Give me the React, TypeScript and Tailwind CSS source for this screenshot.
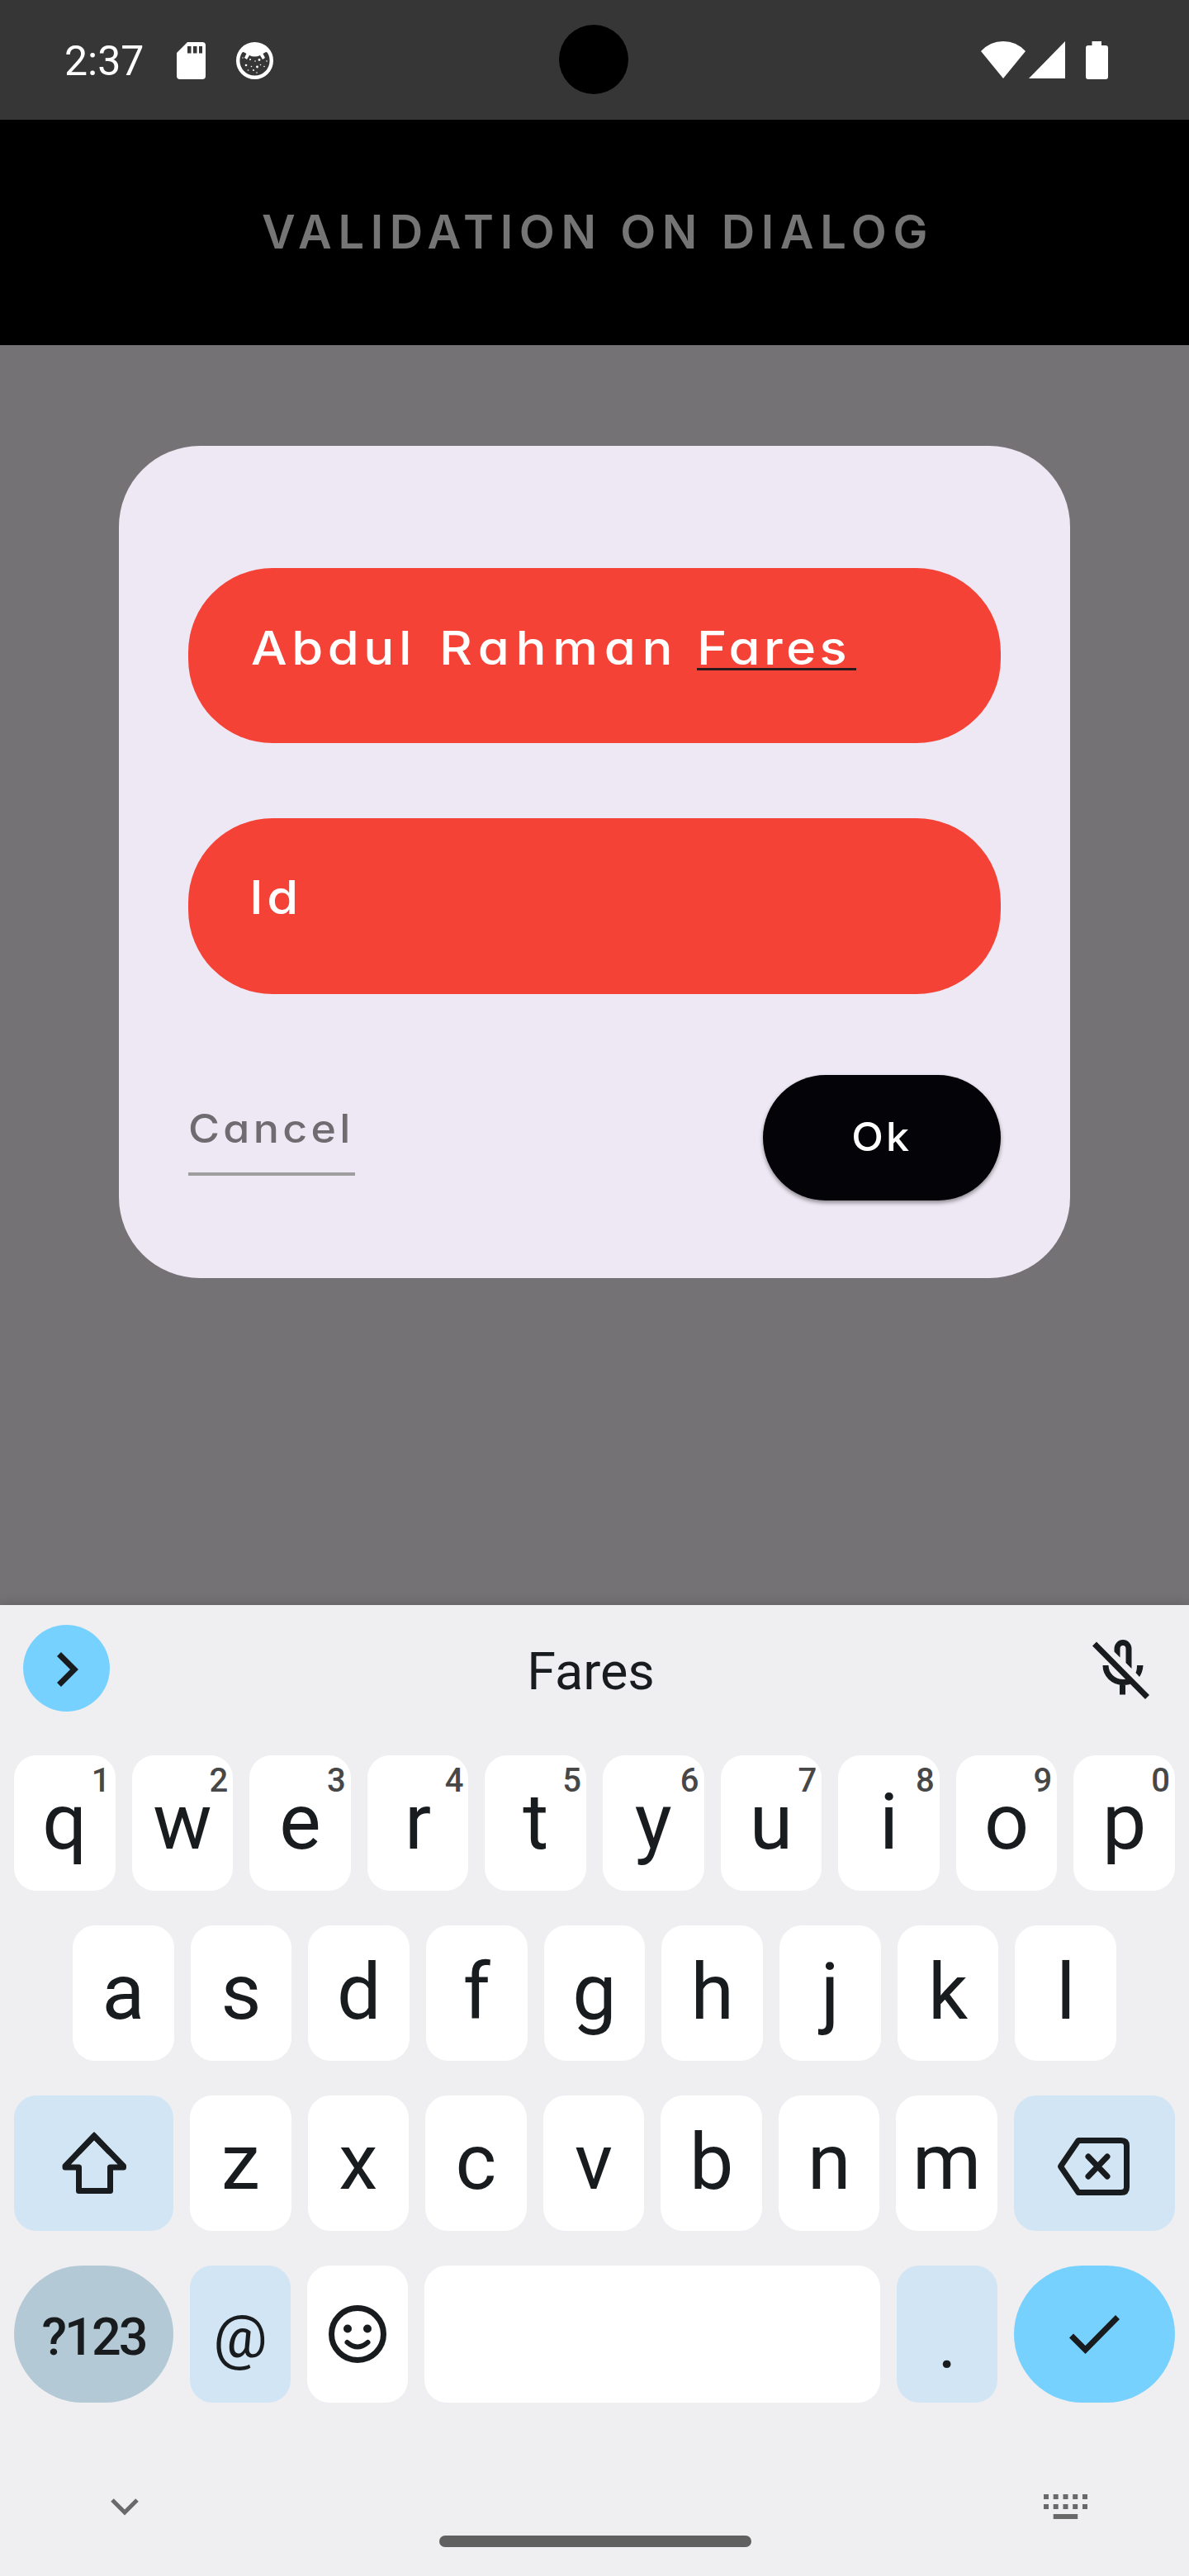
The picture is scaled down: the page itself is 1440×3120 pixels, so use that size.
import React from "react";

type KeyDef = { label: string; hint?: string };

const row1: KeyDef[] = "qwertyuiop".split("").map((c, i) => ({ label: c, hint: String((i + 1) % 10) }));
const row2: KeyDef[] = "asdfghjkl".split("").map((c) => ({ label: c }));
const row3: KeyDef[] = "zxcvbnm".split("").map((c) => ({ label: c }));

function Key({ label, hint }: KeyDef) {
  return (
    <div className="relative flex h-[164px] min-w-0 flex-1 justify-center rounded-[27px] bg-white">
      <span className="mt-[25px] text-[95px] leading-[112px] text-[#191c1e]">{label}</span>
      {hint && (
        <span className="absolute top-[7px] right-[6px] text-[40px] leading-[48px] font-medium text-[#474747]">{hint}</span>
      )}
    </div>
  );
}

function StatusBar() {
  return (
    <div className="relative flex h-[145px] items-start justify-between bg-[#363636] text-white">
      <div className="flex items-start pl-[78px]">
        <span className="mt-[45px] w-[136px] text-[50px] leading-[59px]">2:37</span>
        <svg className="mt-[51px] h-[45px] w-[35px]" viewBox="0 0 35 45" fill="currentColor">
          <path
            fillRule="evenodd"
            d="M13 0H31Q35 0 35 4V41Q35 45 31 45H4Q0 45 0 41V13ZM13 5V13.500H17.500V5ZM20 5V13.500H24.500V5ZM27 5V13.500H31V5Z"
          />
        </svg>
        <svg className="mt-[51px] ml-[37px] h-[45px] w-[45px]" viewBox="0 0 45 45" fill="currentColor">
          <circle cx="22.500" cy="22.500" r="20.300" fill="none" stroke="currentColor" strokeWidth="4.400" />
          <path d="M5 13Q12 1 22.500 1T40 13L36 12L32.500 14L35 19L32 21L29 16Q26 17.500 22.500 17.500T16 16L13 21L10 19L12.500 14L9 12Z" />
          <g>
            <circle cx="8" cy="19" r="0.700" />
            <circle cx="12" cy="28" r="1.300" />
            <circle cx="17" cy="21" r="1" />
            <circle cx="23" cy="23" r="0.800" />
            <circle cx="28" cy="21.500" r="1.400" />
            <circle cx="37" cy="23" r="0.800" />
            <circle cx="25.500" cy="30" r="1.400" />
            <circle cx="18.500" cy="29.500" r="0.800" />
            <circle cx="34" cy="29.500" r="0.800" />
            <circle cx="21" cy="34" r="1" />
            <circle cx="14.500" cy="34" r="0.800" />
            <circle cx="29.500" cy="27.500" r="0.800" />
            <circle cx="25" cy="37" r="0.800" />
          </g>
        </svg>
      </div>
      <div className="absolute top-[30px] left-[677px] size-[84px] rounded-full bg-black" />
      <div className="flex items-start pr-[98px]">
        <svg className="mt-[50px] h-[45px] w-[54px]" viewBox="0 0 54 45" fill="currentColor">
          <path d="M0 12Q11 0 27 0T54 12L27 45Z" />
        </svg>
        <svg className="mt-[50px] ml-[4px] h-[45px] w-[44px]" viewBox="0 0 44 45" fill="currentColor">
          <path d="M44 0V45H0Z" />
        </svg>
        <svg className="mt-[50px] ml-[25px] h-[46px] w-[27px]" viewBox="0 0 27 46" fill="currentColor">
          <path d="M7.500 0H19V5H24Q27 5 27 8V43Q27 46 24 46H3Q0 46 0 43V8Q0 5 3 5H7.500Z" />
        </svg>
      </div>
    </div>
  );
}

function Dialog() {
  return (
    <div className="mx-[144px] mt-[121px] flex h-[1008px] flex-col rounded-[98px] bg-[#eee8f4] px-[84px] pt-[148px] font-['Inter'] font-medium [font-feature-settings:'cv11'_1]">
      <div className="flex h-[212px] items-start rounded-[102px] bg-[#f44336] pt-[64px] pl-[76px] text-[56px] leading-[67px] whitespace-nowrap text-white">
        <span className="w-[228px]">
          <span className="inline-block origin-left scale-x-110 tracking-[5px]">Abdul</span>
        </span>
        <span className="w-[312px]">
          <span className="inline-block origin-left scale-x-110 tracking-[7px]">Rahman</span>
        </span>
        <span className="relative w-[193px]">
          <span className="inline-block origin-left scale-x-110 tracking-[4px]">Fares</span>
          <span className="absolute top-[57px] left-0 h-[3px] w-[193px] bg-[#2b1a1d]" />
        </span>
      </div>
      <div className="mt-[91px] flex h-[213px] items-start rounded-[102px] bg-[#f44336] pt-[63px] pl-[74px] text-[56px] leading-[67px] text-white">
        <span className="inline-block origin-left scale-x-110 tracking-[4px]">Id</span>
      </div>
      <div className="mt-[98px] flex items-start justify-between">
        <div className="mt-[36px] h-[86px] w-[202px] border-b-4 border-[#9e9e9e] text-[48px] leading-[58px] whitespace-nowrap text-[#6f6c71]">
          <span className="inline-block origin-left scale-x-108 tracking-[4px]">Cancel</span>
        </div>
        <div className="flex h-[152px] w-[288px] justify-center rounded-full bg-[#040308] pt-[46px] text-[48px] leading-[58px] text-white shadow-[0_3px_5px_rgba(0,0,0,0.4)]">
          <span className="inline-block scale-x-105 tracking-[3px]">Ok</span>
        </div>
      </div>
    </div>
  );
}

function Keyboard() {
  return (
    <div className="flex h-[1176px] flex-col bg-[#efeff2] shadow-[0_0_14px_rgba(0,0,0,0.2)]">
      <div className="flex h-[182px] items-start justify-between pt-[24px] pr-[48px] pl-[28px]">
        <div className="flex size-[105px] items-center justify-center rounded-full bg-[#77d1ff]">
          <svg className="mt-[2px] ml-[2px] h-[42px] w-[26px]" viewBox="0 0 26 42" fill="none" stroke="#191c1e" strokeWidth="7">
            <path d="M2.500 2.500L21 21L2.500 39.500" />
          </svg>
        </div>
        <span className="mt-[19px] mr-[24px] text-[63px] leading-[76px] text-[#191c1e]">Fares</span>
        <svg className="mt-[17px] h-[74px] w-[70px]" viewBox="0 0 70 74" fill="none" stroke="#191c1e" strokeWidth="7">
          <path d="M3.500 6L67.500 70.500" />
          <path
            d="M27.500 15.500V12A10.500 11 0 0 1 48.500 12V36L41.500 29V12A3.500 4 0 0 0 34.500 12V22.500ZM55 32H62.500Q62 40 58 46L53.500 41Q55 38 55 32Z"
            fill="#191c1e"
            stroke="none"
          />
          <path d="M17 32A21 20.500 0 0 0 38 52.500Q42 52.500 46 51.500M37.500 52V67.500" />
        </svg>
      </div>
      <div className="flex gap-[20px] px-[17px]">
        {row1.map((k) => (
          <Key key={k.label} {...k} />
        ))}
      </div>
      <div className="mt-[42px] flex gap-[20px] px-[88px]">
        {row2.map((k) => (
          <Key key={k.label} {...k} />
        ))}
      </div>
      <div className="mt-[42px] flex gap-[20px] px-[17px]">
        <div className="flex h-[164px] w-[193px] justify-center rounded-[27px] bg-[#d2e5f4]">
          <svg className="mt-[44px] h-[76px] w-[78px]" viewBox="0 0 78 76" fill="none" stroke="#191c1e" strokeWidth="7" strokeLinejoin="round">
            <path d="M39 5L4 41.500V43H20.500V71.500H58.500V43H74.500V41.500Z" />
            <path d="M20 24.800L39 5L58 24.800" strokeLinejoin="miter" />
          </svg>
        </div>
        {row3.map((k) => (
          <Key key={k.label} {...k} />
        ))}
        <div className="flex h-[164px] w-[195px] justify-center rounded-[27px] bg-[#d2e5f4]">
          <svg className="mt-[51px] mr-[3px] h-[70px] w-[88px]" viewBox="0 0 88 70" fill="none" stroke="#191c1e" strokeWidth="7" strokeLinejoin="round">
            <path d="M26 3.500H78Q84.500 3.500 84.500 10V60Q84.500 66.500 78 66.500H26L4.500 35Z" />
            <path d="M38 23L61 47M61 23L38 47" strokeLinecap="round" />
          </svg>
        </div>
      </div>
      <div className="mt-[42px] flex gap-[20px] px-[17px] text-[#191c1e]">
        <div className="flex h-[166px] w-[193px] justify-center rounded-full bg-[#b4c9d6] pt-[49px] text-[63px] leading-[76px] font-medium tracking-[-3px]">
          ?123
        </div>
        <div className="flex h-[166px] w-[122px] justify-center rounded-[27px] bg-[#d2e5f4] pt-[43px] text-[73px] leading-[86px]">@</div>
        <div className="flex h-[166px] w-[122px] items-center justify-center rounded-[27px] bg-white">
          <svg className="size-[70px]" viewBox="0 0 70 70" fill="none" stroke="#191c1e" strokeWidth="7">
            <circle cx="35" cy="35" r="31.500" />
            <circle cx="23" cy="28.500" r="5" fill="#191c1e" stroke="none" />
            <circle cx="47" cy="28.500" r="5" fill="#191c1e" stroke="none" />
            <path d="M22.500 45Q35 56 47.500 45" strokeLinecap="round" strokeWidth="6" />
          </svg>
        </div>
        <div className="h-[166px] flex-1 rounded-[27px] bg-white" />
        <div className="flex h-[166px] w-[122px] justify-center rounded-[27px] bg-[#d2e5f4] pt-[45px] text-[86px] leading-[100px]">.</div>
        <div className="flex h-[166px] w-[195px] items-center justify-center rounded-full bg-[#77d1ff]">
          <svg className="h-[47px] w-[61px]" viewBox="0 0 61 47" fill="none" stroke="#191c1e" strokeWidth="7">
            <path d="M2.500 25L19.500 42L58.500 2.500" />
          </svg>
        </div>
      </div>
      <div className="flex justify-between pt-[111px] pr-[123px] pl-[134px]">
        <svg className="mt-[5px] h-[21px] w-[34px]" viewBox="0 0 34 21" fill="none" stroke="#696969" strokeWidth="5">
          <path d="M2 2L17 17L32 2" />
        </svg>
        <div className="mt-[50px] -mb-[20px] ml-[10px] h-[14px] w-[378px] rounded-full bg-[#606060]" />
        <svg className="h-[30px] w-[53px]" viewBox="0 0 53 30" fill="#696969">
          {[0, 11.7, 23.5, 35.2, 47].map((x) => (
            <g key={x}>
              <rect x={x} y="0" width="6" height="6" />
              <rect x={x} y="12" width="6" height="6" />
            </g>
          ))}
          <rect x="11.700" y="24" width="29.500" height="6" />
        </svg>
      </div>
    </div>
  );
}

export default function App() {
  return (
    <div className="flex h-[3120px] w-[1440px] flex-col overflow-hidden bg-[#757276] font-['Roboto']">
      <StatusBar />
      <div className="flex h-[273px] shrink-0 justify-center bg-black pt-[102px] pl-[8px] font-['Inter'] text-[56px] leading-[68px] font-semibold tracking-[7.600px] whitespace-nowrap text-[#757575]">
        VALIDATION ON DIALOG
      </div>
      <div className="h-[1526px] shrink-0 pt-px">
        <Dialog />
      </div>
      <Keyboard />
    </div>
  );
}
